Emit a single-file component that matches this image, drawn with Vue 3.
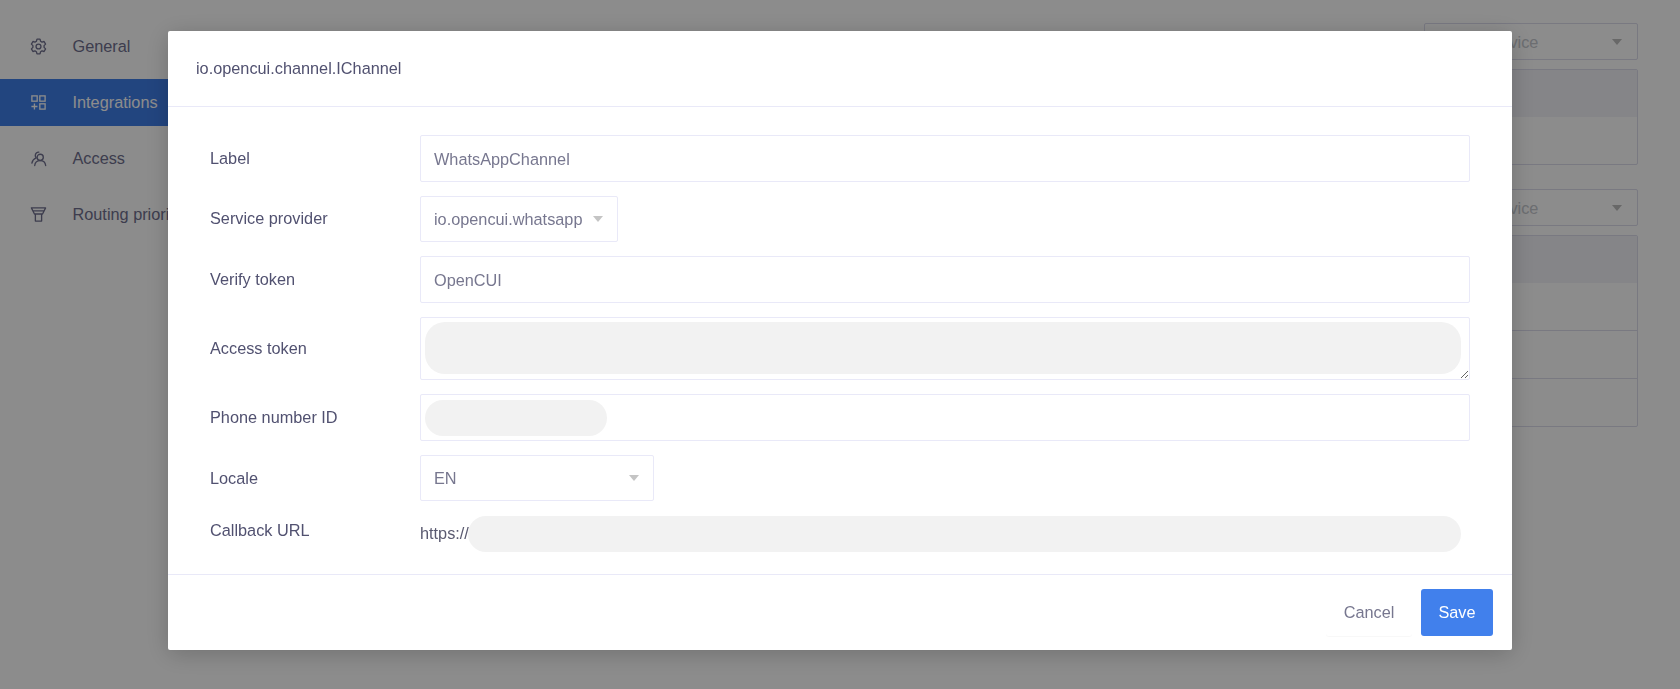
<script setup>
import { ref } from "vue";

const navItems = [
  { label: "General", icon: "gear" },
  { label: "Integrations", icon: "apps", active: true },
  { label: "Access", icon: "people" },
  { label: "Routing priority", icon: "funnel" },
];

const panels = [
  { rows: 1 },
  { rows: 3 },
];

const labelValue = ref("WhatsAppChannel");
const verifyToken = ref("OpenCUI");
const accessToken = ref("");
</script>

<template>
  <div class="page">
    <aside class="sidebar">
      <div v-for="item in navItems" :key="item.label" class="nav-item" :class="{ active: item.active }">
        <svg class="nav-icon" viewBox="0 0 18 18" fill="none" stroke="currentColor" stroke-width="1.4">
          <template v-if="item.icon === 'gear'">
            <path d="M7.400 1.200h3.200l.6 2.200 1.500.9 2.200-.6 1.600 2.800-1.600 1.600v1.800l1.600 1.600-1.600 2.800-2.200-.6-1.500.9-.6 2.200H7.400l-.6-2.200-1.500-.9-2.200.6-1.600-2.800 1.600-1.600V8.100L1.500 6.500l1.600-2.800 2.200.6 1.500-.9z" stroke-linejoin="round" />
            <circle cx="9" cy="9" r="2.600" />
          </template>
          <template v-else-if="item.icon === 'apps'">
            <rect x="2" y="2" width="5.600" height="5.600" />
            <rect x="10.400" y="2" width="5.600" height="5.600" />
            <rect x="10.400" y="10.400" width="5.600" height="5.600" />
            <path d="M1.500 13.200h6.400M4.700 10v6.400" />
          </template>
          <template v-else-if="item.icon === 'people'">
            <circle cx="10.800" cy="7.800" r="3.300" />
            <path d="M5 16.400c.3-3.200 2.800-5.200 5.800-5.200s5.400 2 5.800 5.200M9.400 2.200A3.600 3.600 0 0 0 5.600 5.800c0 1 .3 1.800.9 2.500-2.300.9-4 3-4.500 5.500" stroke-linecap="round" />
          </template>
          <template v-else>
            <path d="M1.500 2h15l-3.200 6.500H4.700zM3.200 5.200h11.600M5.700 8.500h6.600v7.500H5.700z" stroke-linejoin="round" />
          </template>
        </svg>
        <span>{{ item.label }}</span>
      </div>
    </aside>
    <main class="content">
      <section v-for="(panel, i) in panels" :key="i" class="panel">
        <div class="panel-select">
          <span>Select service</span>
          <i class="caret"></i>
        </div>
        <div class="panel-table">
          <div class="table-head"></div>
          <div v-for="n in panel.rows" :key="n" class="table-row"></div>
        </div>
      </section>
    </main>
  </div>

  <div class="overlay">
    <div class="modal">
      <header class="modal-header">io.opencui.channel.IChannel</header>
      <div class="modal-body">
        <div class="form-row">
          <label>Label</label>
          <input v-model="labelValue" class="field" type="text" />
        </div>
        <div class="form-row">
          <label>Service provider</label>
          <div class="field select provider">
            <span>io.opencui.whatsapp</span>
            <i class="caret light"></i>
          </div>
        </div>
        <div class="form-row">
          <label>Verify token</label>
          <input v-model="verifyToken" class="field" type="text" />
        </div>
        <div class="form-row">
          <label>Access token</label>
          <div class="textarea-wrap">
            <textarea v-model="accessToken" class="field area"></textarea>
            <div class="blur-area"></div>
          </div>
        </div>
        <div class="form-row">
          <label>Phone number ID</label>
          <div class="field phone">
            <div class="blur-pill short"></div>
          </div>
        </div>
        <div class="form-row">
          <label>Locale</label>
          <div class="field select locale">
            <span>EN</span>
            <i class="caret light"></i>
          </div>
        </div>
        <div class="form-row callback">
          <label>Callback URL</label>
          <div class="callback-value">
            <span>https://</span>
            <div class="blur-pill long"></div>
          </div>
        </div>
      </div>
      <footer class="modal-footer">
        <button class="btn cancel">Cancel</button>
        <button class="btn save">Save</button>
      </footer>
    </div>
  </div>
</template>

<style>
html,
body {
  margin: 0;
  height: 100%;
  overflow: hidden;
  background: #fff;
}
</style>

<style scoped>
.page {
  display: flex;
  height: 689px;
  font-family: "Liberation Sans", Arial, sans-serif;
  font-size: 16.3px;
  color: #70708e;
}

.sidebar {
  width: 300px;
  padding-top: 23px;
  box-sizing: border-box;
}

.nav-item {
  display: flex;
  align-items: center;
  height: 47px;
  margin-bottom: 9px;
  padding-left: 30px;
  white-space: nowrap;
}

.nav-item.active {
  background: #3f7ee8;
  color: #fff;
}

.nav-icon {
  width: 17px;
  height: 17px;
  margin-right: 25.500px;
  flex-shrink: 0;
}

.content {
  flex: 1;
  display: flex;
  flex-direction: column;
  align-items: flex-end;
  padding: 23px 42px 0 0;
}

.panel {
  width: 214px;
  margin-bottom: 24px;
}

.panel-select {
  display: flex;
  align-items: center;
  justify-content: space-between;
  height: 37px;
  padding: 1px 15px 0 12px;
  box-sizing: border-box;
  border: 1px solid #dcdcec;
  border-radius: 2px;
  color: #c5c8ce;
}

.panel-table {
  margin-top: 9px;
  border: 1px solid #dcdcec;
  border-radius: 2px;
}

.table-head {
  height: 47px;
  background: #f2f2f8;
}

.table-row {
  height: 47px;
  border-top: 1px solid #dcdcec;
}

.table-head + .table-row {
  border-top: 0;
}

.caret {
  display: block;
  width: 0;
  height: 0;
  border-left: 5px solid transparent;
  border-right: 5px solid transparent;
  border-top: 6px solid #bdbdbd;
}

.overlay {
  position: fixed;
  inset: 0;
  display: flex;
  justify-content: center;
  align-items: flex-start;
  padding-top: 31px;
  background: rgba(0, 0, 0, 0.45);
  font-family: "Liberation Sans", Arial, sans-serif;
  font-size: 16.3px;
}

.modal {
  width: 1344px;
  background: #fff;
  border-radius: 2px;
  box-shadow: 0 4px 24px rgba(0, 0, 0, 0.2);
}

.modal-header {
  height: 75px;
  padding-left: 28px;
  line-height: 74px;
  color: #515170;
  border-bottom: 1px solid #e9e9f8;
}

.modal-body {
  display: flex;
  flex-direction: column;
  gap: 14.200px;
  padding: 28px 42px 22px;
  border-bottom: 1px solid #e9e9f8;
}

.form-row {
  display: flex;
  align-items: center;
  color: #515170;
}

.form-row label {
  width: 210px;
  flex-shrink: 0;
}

.field {
  display: block;
  width: 1050px;
  height: 46.500px;
  box-sizing: border-box;
  padding: 2px 13px 0;
  border: 1px solid #e9e9f8;
  border-radius: 2px;
  background: #fff;
  font: inherit;
  color: #77778f;
  outline: none;
}

.select {
  display: flex;
  align-items: center;
  justify-content: space-between;
}

.provider {
  width: 198px;
  padding-top: 1px;
  padding-right: 14px;
}

.locale {
  width: 234px;
  padding-top: 0;
  padding-right: 14px;
}

.caret.light {
  border-top-color: #c4c4c4;
}

.textarea-wrap {
  position: relative;
  width: 1050px;
  height: 63px;
}

.area {
  height: 63px;
  margin: 0;
  resize: vertical;
}

.blur-area {
  position: absolute;
  left: 5px;
  top: 5px;
  width: 1036px;
  height: 52px;
  border-radius: 20px;
  background: #f2f2f2;
  pointer-events: none;
}

.phone {
  display: flex;
  align-items: center;
  padding: 0 4px;
}

.blur-pill {
  height: 36px;
  border-radius: 18px;
  background: #f2f2f2;
}

.blur-pill.short {
  width: 182px;
}

.blur-pill.long {
  width: 993px;
}

.callback {
  align-items: flex-start;
}

.callback label {
  margin-top: 5px;
}

.callback-value {
  display: flex;
  align-items: center;
  color: #5a5a70;
}

.callback-value span {
  width: 48px;
  flex-shrink: 0;
  white-space: nowrap;
}

.modal-footer {
  display: flex;
  justify-content: flex-end;
  gap: 9px;
  padding: 14px 19px 14px 0;
}

.btn {
  height: 47px;
  border: 0;
  border-radius: 3px;
  font: inherit;
  cursor: pointer;
}

.cancel {
  width: 86px;
  background: #fff;
  color: #77778f;
  box-shadow: 0 1px 1px rgba(0, 0, 0, 0.03);
}

.save {
  width: 72px;
  background: #4180ec;
  color: #fff;
}
</style>
